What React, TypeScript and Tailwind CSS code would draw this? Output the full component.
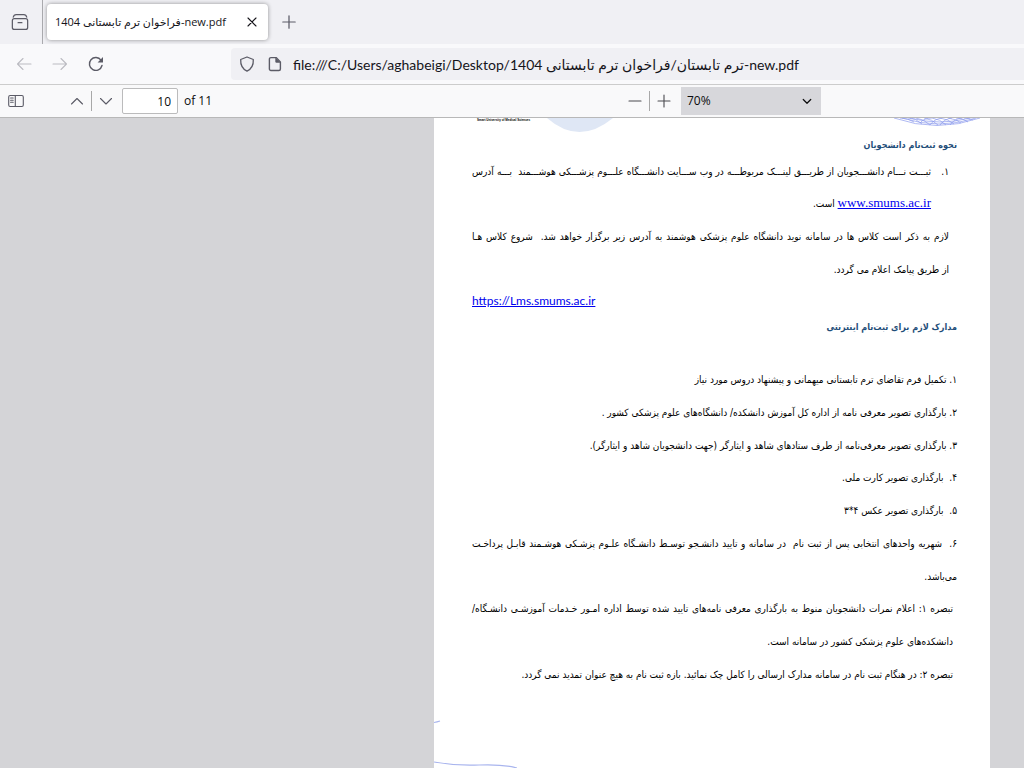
import type { ReactNode } from "react";

type IconProps = {
  children: ReactNode;
  className?: string;
};

const Icon = ({ children, className = "size-4" }: IconProps) => {
  return (
    <svg
      viewBox="0 0 16 16"
      className={className}
      fill="none"
      stroke="currentColor"
      strokeWidth={1.1}
      strokeLinecap="round"
      strokeLinejoin="round"
      aria-hidden="true"
    >
      {children}
    </svg>
  );
};

const TabBar = () => {
  return (
    <div className="flex h-11 bg-[#f0f0f4] text-[#5b5b66]">
      <div className="flex w-[43px] items-center justify-center border-r border-[#aaaaae] pr-0.5">
        <button aria-label="Recent browsing">
          <Icon className="size-[18px]">
            <rect x="1.2" y="5" width="13.6" height="9.6" rx="1.8" />
            <path d="M2 3.6Q2.6 1.4 4.6 1.4h6.8q2 0 2.6 2.2M6.3 8.6h3.4" />
          </Icon>
        </button>
      </div>
      <div className="my-1 ml-1 flex w-[221px] items-center rounded-sm bg-white pl-2 pr-2 shadow-[0_0_4px_rgba(0,0,0,0.4)]">
        <span className="flex-1 whitespace-nowrap font-['Open_Sans','DejaVu_Sans',sans-serif] text-[11px] text-[#15141a]">
          فراخوان ترم تابستانی 1404-new.pdf
        </span>
        <button aria-label="Close tab" className="text-[#15141a]">
          <Icon>
            <path d="m4 4 8 8m0-8-8 8" />
          </Icon>
        </button>
      </div>
      <button aria-label="New tab" className="ml-3">
        <Icon className="size-[18px]">
          <path d="M8 2.5v11M2.5 8h11" />
        </Icon>
      </button>
    </div>
  );
};

const AddressBar = () => {
  return (
    <div className="flex h-10 items-center bg-[#f9f9fb] text-[#5b5b66]">
      <div className="flex w-[231px] items-center gap-5 pl-4">
        <button aria-label="Back" disabled className="text-[#bcbcc2]">
          <Icon>
            <path d="M15 8H1.5M7 2.5 1.5 8 7 13.5" />
          </Icon>
        </button>
        <button aria-label="Forward" disabled className="text-[#bcbcc2]">
          <Icon>
            <path d="M1 8h13.5M9 2.5 14.5 8 9 13.5" />
          </Icon>
        </button>
        <button aria-label="Reload">
          <Icon>
            <path d="M14 9.5A6.4 6.4 0 1 1 13 4.2" strokeWidth="1.4" />
            <path d="M15 1v5.4H9.6z" fill="currentColor" stroke="none" />
          </Icon>
        </button>
      </div>
      <div className="flex h-8 flex-1 items-center gap-3 rounded-l bg-[#f0f0f4] pl-2">
        <Icon>
          <path
            d="M8 1 1.7 3.5c-.3 5 1.3 9.2 6.3 11.7 5-2.5 6.6-6.7 6.3-11.7z"
            strokeWidth="1.3"
          />
        </Icon>
        <Icon>
          <path
            d="M3.9 1.6h5.2L13.4 6v7a1.5 1.5 0 0 1-1.5 1.5h-8A1.5 1.5 0 0 1 2.4 13V3.1a1.5 1.5 0 0 1 1.5-1.5z"
            strokeWidth="1.4"
          />
          <path d="M8.3 1.5V5.6a1.2 1.2 0 0 0 1.2 1.2h4z" fill="currentColor" stroke="none" />
        </Icon>
        <input
          type="text"
          aria-label="Address"
          dir="ltr"
          className="-ml-0.5 flex-1 bg-transparent pt-0.5 text-sm text-[#15141a] outline-none"
          defaultValue="file:///C:/Users/aghabeigi/Desktop/ترم تابستان/فراخوان ترم تابستانی 1404-new.pdf"
        />
      </div>
    </div>
  );
};

const PdfToolbar = () => {
  return (
    <div className="flex h-[34px] items-center border-y border-t-[#cccccc] border-b-[#b8b8b8] bg-[#f9f9fa] font-['Open_Sans','DejaVu_Sans',sans-serif] text-xs text-[#0c0c0d]">
      <button aria-label="Toggle sidebar" className="ml-2 text-[#5b5b66]">
        <Icon>
          <rect x="0.7" y="2.5" width="14.6" height="11" rx="1.4" />
          <path d="M7.3 2.5v11M2.6 5h2.6M2.6 7.2h2.6M2.6 9.3h2.6" />
        </Icon>
      </button>
      <div className="ml-[45px] flex items-center gap-1.5 text-[#5b5b66]">
        <button aria-label="Previous page">
          <Icon>
            <path d="m2.5 11 5.5-5.5 5.5 5.5" />
          </Icon>
        </button>
        <div className="h-5 w-px bg-[#a8a8a8]" />
        <button aria-label="Next page">
          <Icon>
            <path d="m2.5 5.5 5.5 5.5 5.5-5.5" />
          </Icon>
        </button>
      </div>
      <input
        id="page-number"
        type="text"
        aria-label="Page"
        defaultValue="10"
        className="ml-2 h-[26px] w-14 rounded-xs border border-[#bbbbbc] bg-white pr-1.5 text-right"
      />
      <label htmlFor="page-number" className="ml-1.5 w-7 whitespace-nowrap">
        of 11
      </label>
      <div className="ml-[415px] flex items-center gap-1.5 text-[#4a4a4f]">
        <button aria-label="Zoom out">
          <Icon>
            <path d="M2 8h12" />
          </Icon>
        </button>
        <div className="h-5 w-px bg-[#a8a8a8]" />
        <button aria-label="Zoom in">
          <Icon>
            <path d="M8 2v12M2 8h12" />
          </Icon>
        </button>
      </div>
      <div className="relative ml-[9px]">
        <select
          aria-label="Zoom"
          className="h-7 w-[140px] appearance-none bg-[#d7d7db] pl-1.5 text-xs"
        >
          <option>70%</option>
        </select>
        <Icon className="pointer-events-none absolute right-2 top-2 size-3">
          <path d="m3 6 5 5 5-5" strokeWidth="1.6" />
        </Icon>
      </div>
    </div>
  );
};

const REQUIREMENTS = [
  { text: "۱. تکمیل فرم تقاضای ترم تابستانی میهمانی و پیشنهاد دروس مورد نیاز" },
  { text: "۲. بارگذاری تصویر معرفی نامه از اداره کل آموزش دانشکده/ دانشگاه‌های علوم پزشکی کشور ." },
  { text: "۳. بارگذاری تصویر معرفی‌نامه از طرف ستادهای شاهد و ایثارگر (جهت دانشجویان شاهد و ایثارگر)." },
  { text: "۴.\u00a0 بارگذاری تصویر کارت ملی." },
  { text: "۵.\u00a0 بارگذاری تصویر عکس ۴*۳" },
  {
    text: "۶.\u00a0 شهریه واحدهای انتخابی پس از ثبت نام\u00a0 در سامانه و تایید دانشـجو توسـط دانشـگاه علـوم پزشـکی هوشـمند قابـل پرداخـت",
    full: true,
  },
  { text: "می‌باشد." },
  {
    text: "تبصره ۱: اعلام نمرات دانشجویان منوط به بارگذاری معرفی نامه‌های تایید شده توسط اداره امـور خـدمات آموزشـی دانشـگاه/",
    full: true,
    note: true,
  },
  { text: "دانشکده‌های علوم پزشکی کشور در سامانه است.", note: true },
  {
    text: "تبصره ۲: در هنگام ثبت نام در سامانه مدارک ارسالی را کامل چک نمائید. بازه ثبت نام به هیچ عنوان تمدید نمی گردد.",
    note: true,
  },
];

const PageHeader = () => {
  return (
    <div className="flex h-4 items-start pl-[43px]" dir="ltr">
      <span className="w-[70px] whitespace-nowrap font-['Liberation_Sans'] text-[3px] font-bold leading-[4px]">
        Smart University of Medical Sciences
      </span>
      <svg viewBox="0 0 80 14" className="h-3.5 w-20" aria-hidden="true">
        <path d="M0 0Q32 28 66 0z" fill="#dfe7f5" />
      </svg>
      <svg
        viewBox="0 0 90 10"
        className="ml-auto mr-2 h-2.5 w-[90px]"
        fill="none"
        stroke="#8d9bec"
        strokeWidth="0.7"
        aria-hidden="true"
      >
        <path d="M2 0Q45 15 88 0M10 0Q47 12 84 0M18 0Q48 8 78 0" />
        <path d="M8 0q8 0 14 4M16 0q8 0 14 6M24 0q8 1 14 7M32 0q8 1 14 7M40 0q8 1 14 7M48 0q8 1 14 6M56 0q8 1 13 5M64 0q7 0 12 4M72 0q5 0 9 2M28 5q4-5 12-5M38 7q4-6 12-7M48 7q4-6 12-7M58 7q4-6 12-7" />
      </svg>
    </div>
  );
};

const PdfPage = () => {
  return (
    <article
      dir="rtl"
      lang="fa"
      className="ml-auto mr-[34px] flex w-[556px] flex-col bg-white font-['DejaVu_Sans_Condensed','DejaVu_Sans',sans-serif] text-[10px] text-black"
    >
      <PageHeader />
      <div className="flex flex-1 flex-col whitespace-nowrap pl-[38px] pr-[33px]">
        <h2 className="text-[9px] font-bold leading-[22px] text-[#1f4e79]">نحوه ثبت‌نام دانشجویان</h2>
        <div className="pr-2 leading-[33px]">
          <ol className="leading-8">
            <li className="flex">
              <span className="w-[18px]">۱.</span>
              <div className="flex-1">
                <p className="[text-align-last:justify]">
                  ثبـــت نـــام دانشـــجویان از طریـــق لینـــک مربوطـــه در وب ســـایت دانشـــگاه علـــوم پزشـــکی هوشـــمند&nbsp; بـــه آدرس
                </p>
                <p>
                  <a
                    href="http://www.smums.ac.ir"
                    className="font-['Liberation_Serif'] text-[13px] leading-none text-[#0000ee] underline"
                  >
                    www.smums.ac.ir
                  </a>{" "}
                  است.
                </p>
              </div>
            </li>
          </ol>
          <p className="[text-align-last:justify]">
            لازم به ذکر است کلاس ها در سامانه نوید دانشگاه علوم پزشکی هوشمند به آدرس زیر برگزار خواهد شد.&nbsp; شروع کلاس هـا
          </p>
          <p>از طریق پیامک اعلام می گردد.</p>
        </div>
        <p dir="ltr" className="text-left leading-8">
          <a
            href="https://lms.smums.ac.ir"
            className="font-['Lato'] text-xs leading-none text-[#0000ee] underline"
          >
            https://Lms.smums.ac.ir
          </a>
        </p>
        <h2 className="text-[9px] font-bold leading-[18px] text-[#1f4e79]">مدارک لازم برای ثبت‌نام اینترنتی</h2>
        <div className="mt-7 flex h-[327px] flex-col justify-between leading-8">
          {REQUIREMENTS.map((item) => {
            return (
              <p
                key={item.text}
                className={`${item.note ? "pr-1" : ""} ${item.full ? "[text-align-last:justify]" : ""}`}
              >
                {item.text}
              </p>
            );
          })}
        </div>
      </div>
      <svg
        viewBox="0 0 90 50"
        className="mr-auto h-[50px] w-[90px]"
        fill="none"
        stroke="#a9b5ee"
        strokeWidth="1.2"
        aria-hidden="true"
      >
        <path d="M0 4.5Q3 4 6 3M0 44Q22 48 45 47T83 50" />
      </svg>
    </article>
  );
};

export default function App() {
  return (
    <div className="flex h-screen flex-col overflow-hidden font-['Lato','DejaVu_Sans',sans-serif]">
      <header>
        <TabBar />
        <AddressBar />
        <PdfToolbar />
      </header>
      <main className="flex flex-1 overflow-hidden bg-[#d4d4d7]">
        <PdfPage />
      </main>
    </div>
  );
}
